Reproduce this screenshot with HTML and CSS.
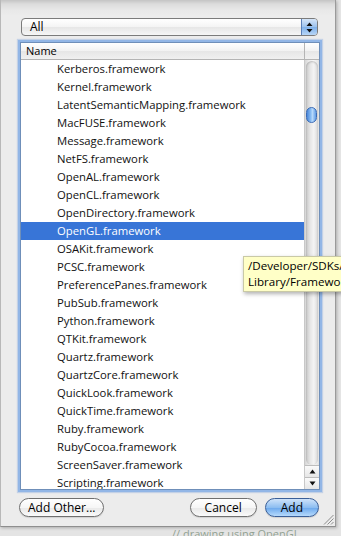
FILE: index.html
```html
<!DOCTYPE html>
<html>
<head>
<meta charset="utf-8">
<link rel="stylesheet" href="styles.css">
</head>
<body>
<div class="sheet">
  <div class="popup">
    <span class="popup-label">All</span>
    <span class="popup-arrows">
      <svg width="7" height="11" viewBox="0 0 7 11"><path d="M3.5 0.5 L6.5 4 L0.5 4 Z M0.5 7 L6.5 7 L3.5 10.5 Z" fill="#111"/></svg>
    </span>
  </div>
  <div class="list">
    <div class="header">
      <span class="header-name">Name</span>
      <span class="header-corner"></span>
    </div>
    <div class="body">
      <div class="rows">
        <div class="row">Kerberos.framework</div>
        <div class="row">Kernel.framework</div>
        <div class="row">LatentSemanticMapping.framework</div>
        <div class="row">MacFUSE.framework</div>
        <div class="row">Message.framework</div>
        <div class="row">NetFS.framework</div>
        <div class="row">OpenAL.framework</div>
        <div class="row">OpenCL.framework</div>
        <div class="row">OpenDirectory.framework</div>
        <div class="row selected">OpenGL.framework</div>
        <div class="row">OSAKit.framework</div>
        <div class="row">PCSC.framework</div>
        <div class="row">PreferencePanes.framework</div>
        <div class="row">PubSub.framework</div>
        <div class="row">Python.framework</div>
        <div class="row">QTKit.framework</div>
        <div class="row">Quartz.framework</div>
        <div class="row">QuartzCore.framework</div>
        <div class="row">QuickLook.framework</div>
        <div class="row">QuickTime.framework</div>
        <div class="row">Ruby.framework</div>
        <div class="row">RubyCocoa.framework</div>
        <div class="row">ScreenSaver.framework</div>
        <div class="row">Scripting.framework</div>
      </div>
      <div class="scrollbar">
        <div class="track">
          <div class="thumb"></div>
        </div>
        <div class="arrow arrow-up">
          <svg width="7" height="5" viewBox="0 0 7 5"><path d="M3.5 0.5 L6.5 4.5 L0.5 4.5 Z" fill="#111"/></svg>
        </div>
        <div class="arrow arrow-down">
          <svg width="7" height="5" viewBox="0 0 7 5"><path d="M0.5 0.5 L6.5 0.5 L3.5 4.5 Z" fill="#111"/></svg>
        </div>
      </div>
    </div>
  </div>
  <div class="buttons">
    <button class="btn">Add Other...</button>
    <span class="spacer"></span>
    <button class="btn btn-cancel">Cancel</button>
    <button class="btn btn-default">Add</button>
  </div>
  <svg class="grip" width="11" height="11" viewBox="0 0 11 11">
    <path d="M10.5 1 L1 10.5 M10.5 4.5 L4.5 10.5 M10.5 8 L8 10.5" stroke="#8c8c8c" stroke-width="1"/>
  </svg>
</div>
<div class="tooltip">/Developer/SDKs/<br>Library/Framewor</div>
<div class="behind">// drawing using OpenGL</div>
</body>
</html>
```
FILE: styles.css
```css
html, body {
  margin: 0;
  padding: 0;
}
body {
  width: 341px;
  height: 536px;
  overflow: hidden;
  position: relative;
  background: #e4e4e4;
  font-family: "Open Sans", "Lucida Grande", sans-serif;
  color: #000;
}
.sheet {
  position: relative;
  box-sizing: border-box;
  width: 336px;
  height: 527px;
  padding-top: 18px;
  background: linear-gradient(#c4c4c4 0px, #dcdcdc 4px, #e8e8e8 10px, #ececec 16px);
  border-right: 1px solid #9a9a9a;
  border-left: 1px solid #b8b8b8;
  border-bottom: 1px solid #8e8e8e;
  box-shadow: 1px 1px 3px rgba(0,0,0,0.25);
}
.popup {
  margin-left: 20px;
  width: 297px;
  height: 18px;
  box-sizing: border-box;
  border: 1px solid #7b7b7b;
  border-radius: 4px;
  background: linear-gradient(#ffffff, #f4f4f4 50%, #e6e6e6 51%, #f6f6f6);
  display: flex;
  align-items: center;
  overflow: hidden;
}
.popup-label {
  flex: 1;
  padding-left: 8px;
  font-size: 12px;
  line-height: 16px;
}
.popup-arrows {
  width: 15px;
  height: 16px;
  display: flex;
  align-items: center;
  justify-content: center;
  border-left: 1px solid #5a7fb8;
  background: linear-gradient(#d5e5f8, #9cc2ee 50%, #7eb0ea 51%, #b8d6f6);
}
.list {
  margin-top: 6px;
  margin-left: 19px;
  width: 300px;
  height: 448px;
  box-sizing: border-box;
  border: 1px solid #6f8fb9;
  box-shadow: 0 0 0 2px #92b6e6, 0 0 1px 3px rgba(120,160,220,0.35);
  background: #fff;
  display: flex;
  flex-direction: column;
  overflow: hidden;
}
.header {
  height: 16px;
  flex: none;
  display: flex;
  border-bottom: 1px solid #b4b4b4;
  background: linear-gradient(#ffffff, #f2f2f2 50%, #e6e6e6 51%, #f0f0f0);
}
.header-name {
  flex: 1;
  font-size: 11px;
  line-height: 16px;
  padding-left: 5px;
}
.header-corner {
  width: 14px;
  border-left: 1px solid #b4b4b4;
}
.body {
  flex: 1;
  display: flex;
  min-height: 0;
}
.rows {
  flex: 1;
  overflow: hidden;
}
.row {
  height: 18px;
  line-height: 17px;
  font-size: 11.3px;
  padding-left: 36px;
  white-space: nowrap;
  color: #111;
}
.row.selected {
  background: #3875d7;
  color: #fff;
}
.scrollbar {
  width: 15px;
  flex: none;
  display: flex;
  flex-direction: column;
  border-left: 1px solid #c8c8c8;
  box-sizing: border-box;
  background: linear-gradient(90deg, #d6d6d6, #ececec 30%, #f6f6f6 60%, #e2e2e2);
}
.track {
  flex: 1;
  position: relative;
  margin: 1px 1px 0 1px;
  border-radius: 6px;
  background: linear-gradient(90deg, #c8c8c8, #e6e6e6 35%, #f4f4f4 65%, #dadada);
  box-shadow: inset 0 1px 2px rgba(0,0,0,0.2);
}
.thumb {
  position: absolute;
  left: 0;
  right: 1px;
  top: 46px;
  height: 16px;
  border-radius: 6px;
  border: 1px solid #3a6bb6;
  box-sizing: border-box;
  background: linear-gradient(90deg, #4a86d8, #8ec0f4 45%, #b8dafc 60%, #5f9ae4);
}
.arrow {
  height: 11px;
  display: flex;
  align-items: center;
  justify-content: center;
  border-top: 1px solid #bdbdbd;
  background: linear-gradient(#fafafa, #e6e6e6);
}
.buttons {
  display: flex;
  align-items: center;
  margin-top: 8px;
  padding-left: 18px;
  width: 318px;
  box-sizing: border-box;
  gap: 8px;
}
.spacer {
  flex: 1;
}
.btn {
  height: 19px;
  font-family: "Open Sans", "Lucida Grande", sans-serif;
  font-size: 12px;
  line-height: 16px;
  padding: 0 8px;
  border: 1px solid #6f6f6f;
  border-radius: 10px;
  background: linear-gradient(#ffffff, #f6f6f6 50%, #e8e8e8 51%, #fafafa);
  color: #000;
  box-shadow: 0 1px 1px rgba(0,0,0,0.12);
  margin: 0;
}
.btn-cancel {
  padding: 0 14px;
}
.btn-default {
  padding: 0 15px;
  border-color: #3a5f98;
  background: linear-gradient(#cfe3fa, #8dbef1 50%, #6aa7ec 51%, #b6dafc);
}
.grip {
  position: absolute;
  right: 1px;
  bottom: 1px;
}
.tooltip {
  position: absolute;
  left: 243px;
  top: 256px;
  width: 110px;
  height: 36px;
  box-sizing: border-box;
  padding: 1px 0 0 4px;
  background: #ffffc7;
  border: 1px solid #c9c9a6;
  box-shadow: 1px 2px 4px rgba(0,0,0,0.3);
  font-size: 11.6px;
  line-height: 16px;
  white-space: nowrap;
  overflow: hidden;
}
.behind {
  position: absolute;
  left: 172px;
  top: 528px;
  font-size: 11px;
  color: #3f5f3f;
  opacity: 0.5;
  line-height: 12px;
}
```
